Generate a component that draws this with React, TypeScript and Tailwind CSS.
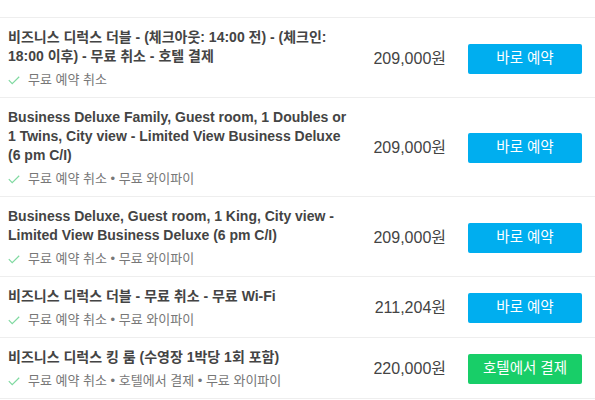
const rooms = [
  {
    title: "비즈니스 디럭스 더블 - (체크아웃: 14:00 전) - (체크인: 18:00 이후) - 무료 취소 - 호텔 결제",
    perks: "무료 예약 취소",
    price: "209,000원",
    action: "바로 예약",
    green: false,
  },
  {
    title: "Business Deluxe Family, Guest room, 1 Doubles or 1 Twins, City view - Limited View Business Deluxe (6 pm C/I)",
    perks: "무료 예약 취소 • 무료 와이파이",
    price: "209,000원",
    action: "바로 예약",
    green: false,
  },
  {
    title: "Business Deluxe, Guest room, 1 King, City view - Limited View Business Deluxe (6 pm C/I)",
    perks: "무료 예약 취소 • 무료 와이파이",
    price: "209,000원",
    action: "바로 예약",
    green: false,
  },
  {
    title: "비즈니스 디럭스 더블 - 무료 취소 - 무료 Wi-Fi",
    perks: "무료 예약 취소 • 무료 와이파이",
    price: "211,204원",
    action: "바로 예약",
    green: false,
  },
  {
    title: "비즈니스 디럭스 킹 룸 (수영장 1박당 1회 포함)",
    perks: "무료 예약 취소 • 호텔에서 결제 • 무료 와이파이",
    price: "220,000원",
    action: "호텔에서 결제",
    green: true,
  },
];

const Check = () => (
  <svg width="12" height="9" viewBox="0 0 12 9" className="shrink-0">
    <path d="M0.8 4.2 L4.2 7.6 L11.2 0.8" fill="none" stroke="#7fd9a0" strokeWidth="1.2" />
  </svg>
);

export default function App() {
  return (
    <div
      className="w-[595px] h-[400px] overflow-hidden bg-white text-[#444]"
      style={{ fontFamily: '"Liberation Sans", "Noto Sans CJK KR", sans-serif' }}
    >
      <div className="h-[18px] border-b border-[#eeeeee]" />
      {rooms.map((r, i) => (
        <div key={i} className="flex items-center border-b border-[#eeeeee] pl-2 pr-[13px] pt-[10px] pb-[8px]">
          <div className="w-[342px]">
            <div className="text-[14px] leading-[19px] font-bold text-[#444]">{r.title}</div>
            <div className="flex items-center mt-[5px] text-[13px] leading-[18px] text-[#777]">
              <Check />
              <span className="ml-2">{r.perks}</span>
            </div>
          </div>
          <div className="flex-1 text-right text-[16px] text-[#444]">{r.price}</div>
          <button
            className={
              "ml-[22px] w-[114px] h-[30px] rounded-[2px] text-white text-[14.5px] " +
              (r.green ? "bg-[#18ce68]" : "bg-[#00aeef]")
            }
          >
            {r.action}
          </button>
        </div>
      ))}
    </div>
  );
}
